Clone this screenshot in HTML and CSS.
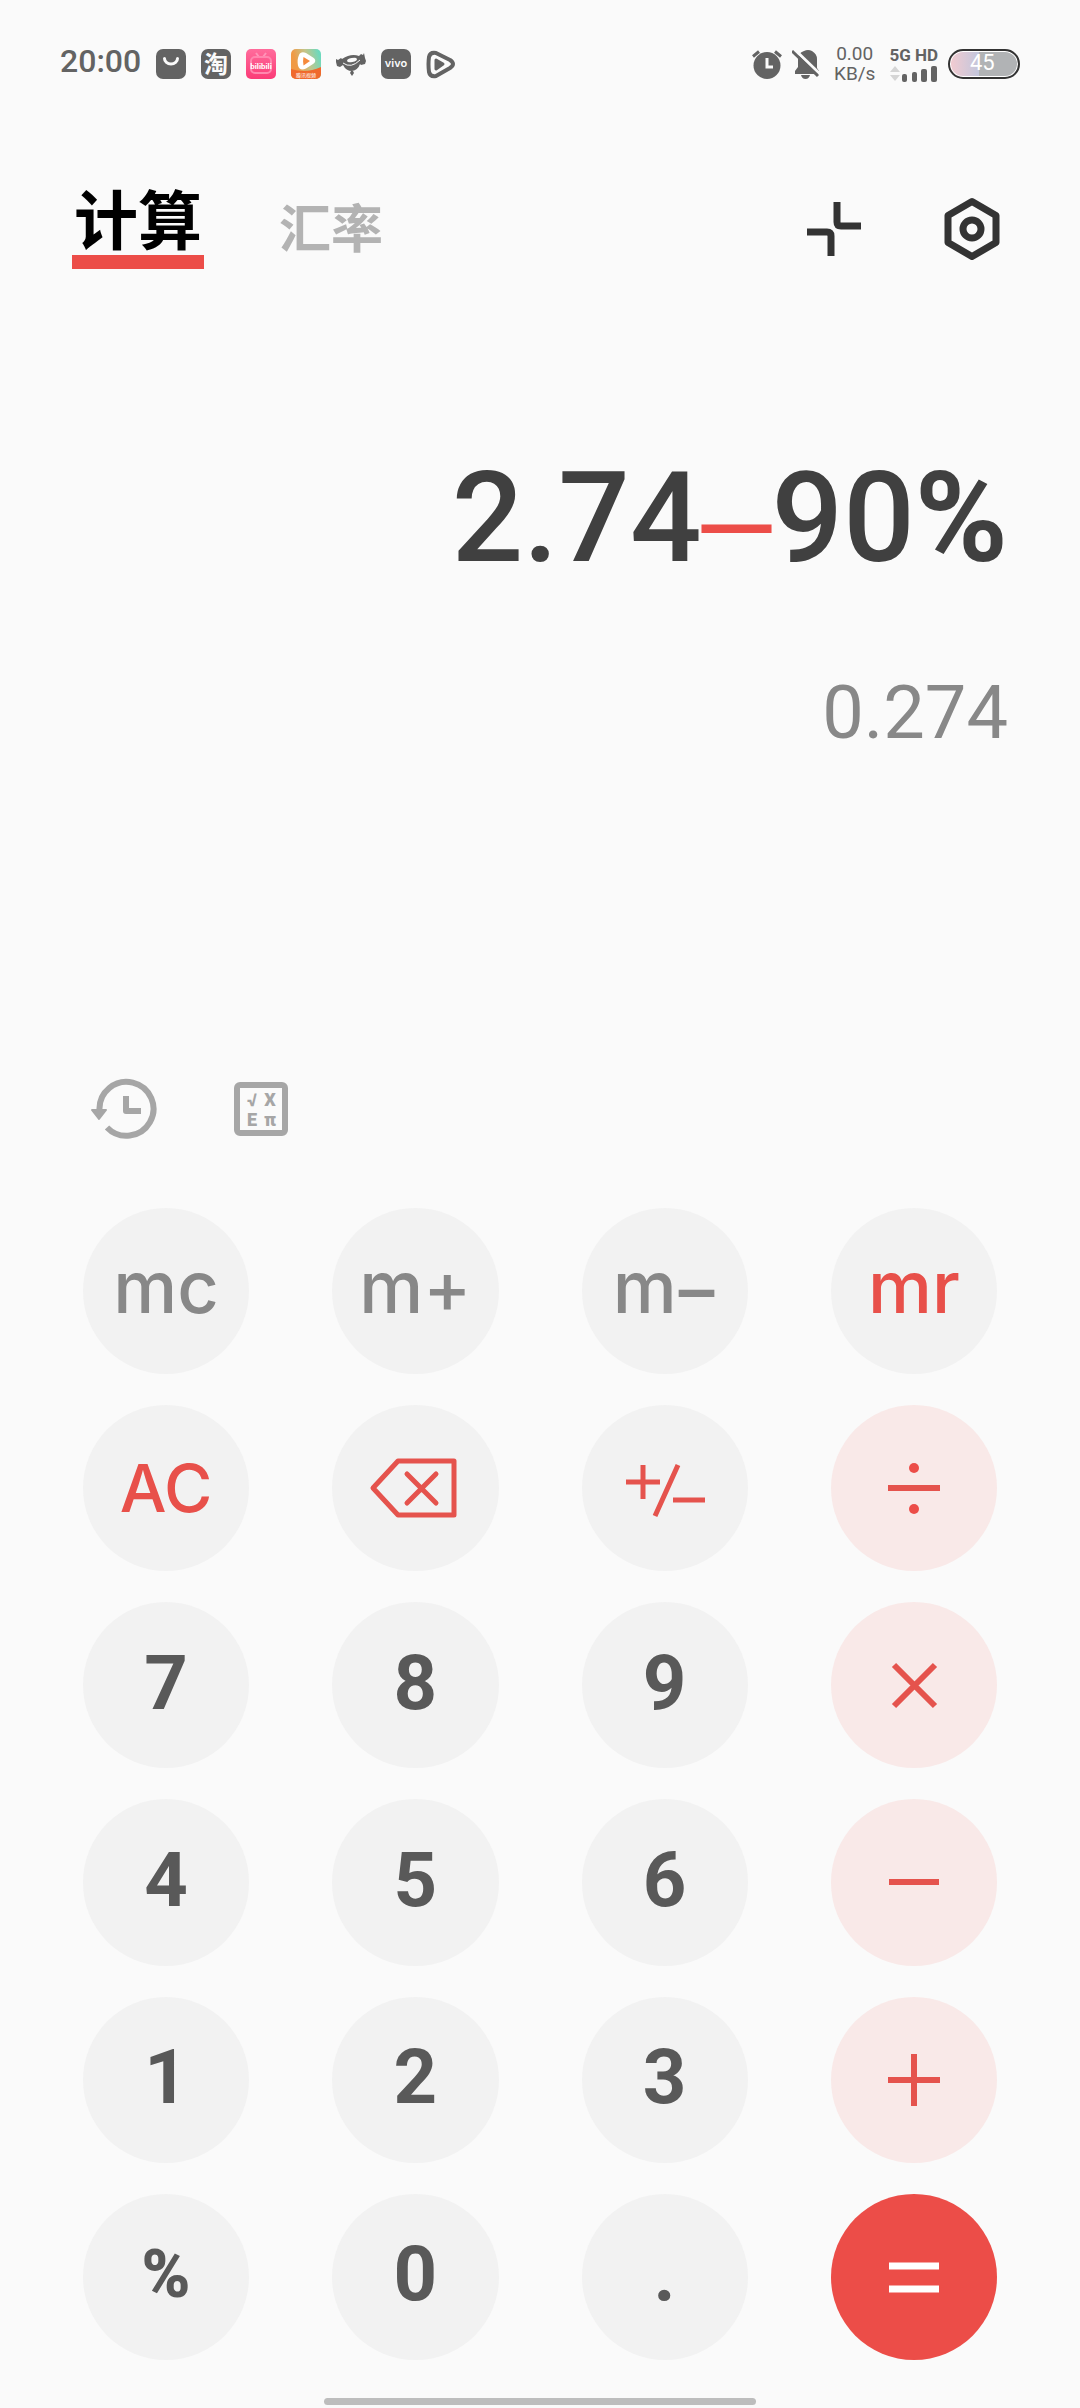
FILE: index.html
```html
<!DOCTYPE html>
<html lang="zh-CN">

<head>
    <meta charset="UTF-8" />
    <meta name="viewport" content="width=device-width, initial-scale=1" />
    <title>计算</title>
    <link rel="stylesheet" href="styles.css">
</head>

<body>
    <div class="status-bar">
        <div class="status-left">
            <span class="time">20:00</span>
            <svg class="app-icon" viewBox="0 0 30 30">
                <rect width="30" height="30" rx="7" fill="#636363" />
                <path d="M8.500 9.500a6.500 5.500 0 0 0 13 0" fill="none" stroke="#fafafa" stroke-width="3" stroke-linecap="round" />
            </svg>
            <svg class="app-icon" viewBox="0 0 30 30">
                <rect width="30" height="30" rx="7" fill="#636363" />
                <text class="taobao" x="15" y="24" text-anchor="middle">淘</text>
            </svg>
            <svg class="app-icon" viewBox="0 0 30 30">
                <defs>
                    <linearGradient id="pink" x1="0" y1="0" x2="0" y2="1">
                        <stop offset="0" stop-color="#ff6c9c" />
                        <stop offset="1" stop-color="#fb3b77" />
                    </linearGradient>
                </defs>
                <rect width="30" height="30" rx="5" fill="url(#pink)" />
                <path d="M10 4l3 4M20 4l-3 4" stroke="#ff94b8" stroke-width="2" />
                <rect x="5" y="8" width="20" height="16" rx="4" fill="none" stroke="#ff86ae" stroke-width="2" />
                <text class="bili" x="15" y="20" text-anchor="middle">bilibili</text>
            </svg>
            <svg class="app-icon" viewBox="0 0 30 30">
                <defs>
                    <linearGradient id="sunset" x1="0" y1="0.3" x2="1" y2="0">
                        <stop offset="0.1" stop-color="#f09a45" />
                        <stop offset="0.5" stop-color="#c3c58a" />
                        <stop offset="0.9" stop-color="#6ed9bd" />
                    </linearGradient>
                    <clipPath id="round"><rect width="30" height="30" rx="5" /></clipPath>
                </defs>
                <g clip-path="url(#round)">
                    <rect width="30" height="30" fill="url(#sunset)" />
                    <path d="M0 20q15 5 30-2v12H0z" fill="#f0692c" />
                </g>
                <path d="M8 6c1-3 4-3.500 7-2l7 4.500c3 2 3 4.500 0 6.500l-7 4.500c-4 2-7 1-8-3-.7-4-.5-7 1-10.500z" fill="#fff" />
                <path d="M12.500 8l6.500 4-6.500 4.500q-1-4 0-8.500z" fill="#f58a3c" />
                <text class="orange-label" x="15" y="28" text-anchor="middle">腾讯视频</text>
            </svg>
            <svg class="app-icon" viewBox="0 0 30 30" fill="#636363">
                <path d="M0 10l2 1 3-2 1 1q9-6 17-3l2-2 2 1 1-2 1 5 1 3-1 3-4 1-1-1q-2 6-8 7-6 0-9-6l-3 2-3-1-1-4z" />
                <ellipse cx="16" cy="11" rx="5" ry="2" fill="#fafafa" transform="rotate(-12 16 11)" />
                <path d="M7 14q8 6 17-3" fill="none" stroke="#fafafa" stroke-width="1" />
                <path d="M15 22h2l1 2-2 3-2-3z" />
            </svg>
            <svg class="app-icon" viewBox="0 0 30 30">
                <rect width="30" height="30" rx="7" fill="#636363" />
                <text class="vivo" x="15" y="18" text-anchor="middle">vivo</text>
            </svg>
            <svg class="app-icon" viewBox="0 0 30 30" fill="none" stroke="#636363" stroke-linejoin="round">
                <path d="M3 8q1-5 7-4l14 7q6 4 0 8l-14 8q-6 1-7-4-1-8 0-15z" stroke-width="4" />
                <path d="M10 11l7 4-7 5z" stroke-width="3" fill="#636363" />
            </svg>
        </div>
        <div class="status-right">
            <svg class="app-icon" viewBox="0 0 30 30">
                <circle cx="15" cy="16.500" r="13.500" fill="#636363" />
                <path d="M1 7.500l6-5M29 7.500l-6-5" stroke="#636363" stroke-width="3" />
                <path d="M15 9v9h6" fill="none" stroke="#fafafa" stroke-width="3" />
            </svg>
            <svg class="bell-icon" viewBox="0 0 28 30" fill="#636363">
                <path d="M3 25v-3l3-4v-8q0-6 6-8 4-2 8 0 5 3 5 8v9l2 3v3z" />
                <path d="M9 26h9q-1 4-4.500 4T9 26z" />
                <path d="M2 0l26 25" stroke="#fafafa" stroke-width="3" />
                <path d="M0 2l26 25" stroke="#636363" stroke-width="3" />
            </svg>
            <div class="net-speed">
                <span>0.00</span>
                <span>KB/s</span>
            </div>
            <div class="network">
                <span>5G HD</span>
                <svg class="signal" viewBox="0 0 48 17">
                    <path d="M1 7l5-6 5 6zM1 10l5 6 5-6z" fill="#d5d5d5" />
                    <g fill="#636363">
                        <rect x="13" y="9" width="5" height="8" rx="2" />
                        <rect x="23" y="7" width="5" height="10" rx="2" />
                        <rect x="32" y="4" width="6" height="13" rx="2" />
                        <rect x="42" y="1" width="6" height="16" rx="2" />
                    </g>
                </svg>
            </div>
            <div class="battery">45</div>
        </div>
    </div>

    <div class="header">
        <div class="tabs">
            <button class="tab active">计算</button>
            <button class="tab">汇率</button>
        </div>
        <div class="actions">
            <button class="icon-btn" aria-label="小窗">
                <svg width="64" height="64" viewBox="0 0 64 64" fill="none" stroke="#333" stroke-width="7">
                    <path d="M35 5v20q0 4 4 4h20M5 35h20q4 0 4 4v20" />
                </svg>
            </button>
            <button class="icon-btn" aria-label="设置">
                <svg width="64" height="64" viewBox="0 0 64 64" fill="none" stroke="#333" stroke-width="7" stroke-linejoin="round">
                    <path d="M32 4.500L56 18.500v27L32 59.500 8 45.500v-27z" />
                    <circle cx="32" cy="32" r="9" />
                </svg>
            </button>
        </div>
    </div>

    <div class="display">
        <div class="expression">2.74<span class="dash">–</span>90<b>%</b></div>
        <div class="result">0.274</div>
    </div>

    <div class="tools">
        <button class="icon-btn" aria-label="历史记录">
            <svg width="68" height="64" viewBox="0 0 68 64" fill="none" stroke="#a6a6a6" stroke-width="6">
                <path d="M9.500 33A27 27 0 1 1 17 50.500" />
                <path d="M36 19v15h15" stroke-linejoin="round" />
                <path d="M2 33h14l-7 9z" fill="#a6a6a6" stroke-width="2" stroke-linejoin="round" />
            </svg>
        </button>
        <button class="icon-btn" aria-label="科学计算">
            <svg width="54" height="54" viewBox="0 0 54 54">
                <rect x="3" y="3" width="48" height="48" rx="3" fill="none" stroke="#a6a6a6" stroke-width="6" />
                <g class="formula" text-anchor="middle">
                    <text x="18" y="24">√</text>
                    <text x="36" y="24">X</text>
                    <text x="18" y="44">E</text>
                    <text x="36" y="44">π</text>
                </g>
            </svg>
        </button>
    </div>

    <div class="keypad">
        <button class="key memory">mc</button>
        <button class="key memory">m+</button>
        <button class="key memory">m<b class="dash">–</b></button>
        <button class="key memory red">mr</button>

        <button class="key clear red">AC</button>
        <button class="key" aria-label="删除">
            <svg viewBox="0 0 96 96" stroke-width="5" stroke-linejoin="round">
                <path d="M6 48l25-27h56v54H31z" />
                <path d="M40 34l29 29M69 34L40 63" stroke-linecap="round" />
            </svg>
        </button>
        <button class="key" aria-label="正负">
            <svg viewBox="0 0 96 96" stroke-width="5">
                <path d="M9 42h34M26 25v34M61 25L38 76M56 60h32" />
            </svg>
        </button>
        <button class="key operator" aria-label="除">
            <svg viewBox="0 0 96 96">
                <path d="M22 48h52" />
                <circle class="dot" cx="48" cy="28" r="5" />
                <circle class="dot" cx="48" cy="69" r="5" />
            </svg>
        </button>

        <button class="key number">7</button>
        <button class="key number">8</button>
        <button class="key number">9</button>
        <button class="key operator" aria-label="乘">
            <svg viewBox="0 0 96 96"><path d="M28 28l41 41M69 28L28 69" /></svg>
        </button>

        <button class="key number">4</button>
        <button class="key number">5</button>
        <button class="key number">6</button>
        <button class="key operator" aria-label="减">
            <svg viewBox="0 0 96 96"><path d="M23 48h50" /></svg>
        </button>

        <button class="key number">1</button>
        <button class="key number">2</button>
        <button class="key number">3</button>
        <button class="key operator" aria-label="加">
            <svg viewBox="0 0 96 96"><path d="M22 48h52M48 22v52" /></svg>
        </button>

        <button class="key number percent">%</button>
        <button class="key number">0</button>
        <button class="key number">.</button>
        <button class="key equals" aria-label="等于">
            <svg viewBox="0 0 96 96"><path d="M23 37h50M23 60h50" /></svg>
        </button>
    </div>

    <div class="home-bar"></div>
</body>

</html>
```

FILE: styles.css
```css
* {
    box-sizing: border-box;
    margin: 0;
    padding: 0;
}

body {
    display: flex;
    flex-direction: column;
    min-height: 100vh;
    font-family: Roboto, "Noto Sans CJK SC", sans-serif;
    background-color: #fafafa;
    color: #404040;
}

button {
    border: none;
    background: none;
    font-family: inherit;
    cursor: pointer;
}

svg {
    display: block;
}

/* status bar */
.status-bar {
    display: flex;
    justify-content: space-between;
    align-items: center;
    height: 128px;
    padding: 0 60px;
    color: #636363;
}

.status-left,
.status-right {
    display: flex;
    align-items: center;
}

.status-left {
    gap: 15px;
}

.status-right {
    gap: 10px;
}

.time {
    font-size: 32px;
    font-weight: 500;
    line-height: 40px;
    padding-bottom: 6px;
}

.app-icon {
    width: 30px;
    height: 30px;
}

.bell-icon {
    width: 28px;
    height: 30px;
}

.taobao {
    font-size: 24px;
    font-weight: 700;
    fill: #fafafa;
}

.bili {
    font-size: 8px;
    font-weight: 700;
    fill: #fff;
}

.orange-label {
    font-size: 5px;
    fill: #fff;
}

.vivo {
    font-family: Inter, sans-serif;
    font-size: 11px;
    font-weight: 600;
    fill: #fafafa;
}

.net-speed {
    display: flex;
    flex-direction: column;
    align-items: center;
    margin: 0 4px;
    font-size: 19px;
    line-height: 20px;
}

.network {
    display: flex;
    flex-direction: column;
    gap: 2px;
    font-size: 17px;
    font-weight: 700;
    line-height: 16px;
}

.signal {
    width: 48px;
    height: 17px;
}

.battery {
    width: 72px;
    height: 30px;
    border: 2px solid #333;
    border-radius: 15px;
    background: linear-gradient(90deg, #f3cbd0, #c3c6dc 42%, #b1b3b5 42%);
    box-shadow: inset 0 0 0 1px #fff;
    padding-left: 20px;
    font-size: 22px;
    line-height: 24px;
    color: #fff;
}

/* header */
.header {
    display: flex;
    justify-content: space-between;
    align-items: center;
    padding: 60px 76px 0 72px;
}

.tabs {
    display: flex;
    align-items: flex-end;
    gap: 75px;
}

.tab {
    font-size: 52px;
    font-weight: 700;
    line-height: 76px;
    color: #b3b3b3;
}

.tab.active {
    padding: 3px 2px 0;
    font-size: 64px;
    line-height: 64px;
    color: #000;
    border-bottom: 14px solid #ec4d48;
}

.actions {
    display: flex;
    gap: 74px;
}

/* expression and result */
.display {
    padding: 174px 72px 0;
    text-align: right;
}

.expression {
    font-size: 126px;
    font-weight: 500;
    line-height: 150px;
}

.expression .dash {
    color: #ec4d48;
}

.dash {
    font-family: "Liberation Sans", sans-serif;
    line-height: 1;
}

.result {
    margin-top: 76px;
    font-size: 74px;
    line-height: 88px;
    color: #888;
}

/* history and formula buttons */
.tools {
    display: flex;
    align-items: center;
    gap: 76px;
    margin-top: auto;
    padding: 0 90px;
}

.formula text {
    font-size: 18px;
    font-weight: 900;
    fill: #a6a6a6;
}

/* keypad */
.keypad {
    display: grid;
    grid-template-columns: repeat(4, 1fr);
    column-gap: 83px;
    row-gap: 31px;
    padding: 67px 83px 38px;
}

.key {
    display: flex;
    justify-content: center;
    align-items: center;
    aspect-ratio: 1;
    border-radius: 50%;
    background-color: #f2f2f2;
    color: #888;
}

.key svg {
    width: 96px;
    height: 96px;
    fill: none;
    stroke: #e5534d;
}

.memory {
    align-items: baseline;
    padding-top: 36px;
    font-family: Inter, sans-serif;
    font-size: 72px;
    font-weight: 500;
    line-height: 86px;
}

.clear {
    font-family: Inter, sans-serif;
    font-size: 66px;
    font-weight: 500;
}

.red {
    color: #e8504a;
}

.number {
    padding-bottom: 5px;
    font-size: 76px;
    font-weight: 700;
    color: #595959;
}

.percent {
    font-size: 66px;
    font-weight: 900;
}

.operator {
    background-color: #f9e9e8;
}

.operator svg,
.equals svg {
    stroke-width: 6;
}

.operator .dot {
    fill: #ec4d48;
    stroke: none;
}

.equals {
    background-color: #ec4d48;
}

.equals svg {
    stroke: #fff;
    stroke-width: 7;
}

.home-bar {
    width: 40%;
    height: 7px;
    margin: 0 auto 3px;
    border-radius: 4px;
    background-color: #bdbdbd;
}
```
